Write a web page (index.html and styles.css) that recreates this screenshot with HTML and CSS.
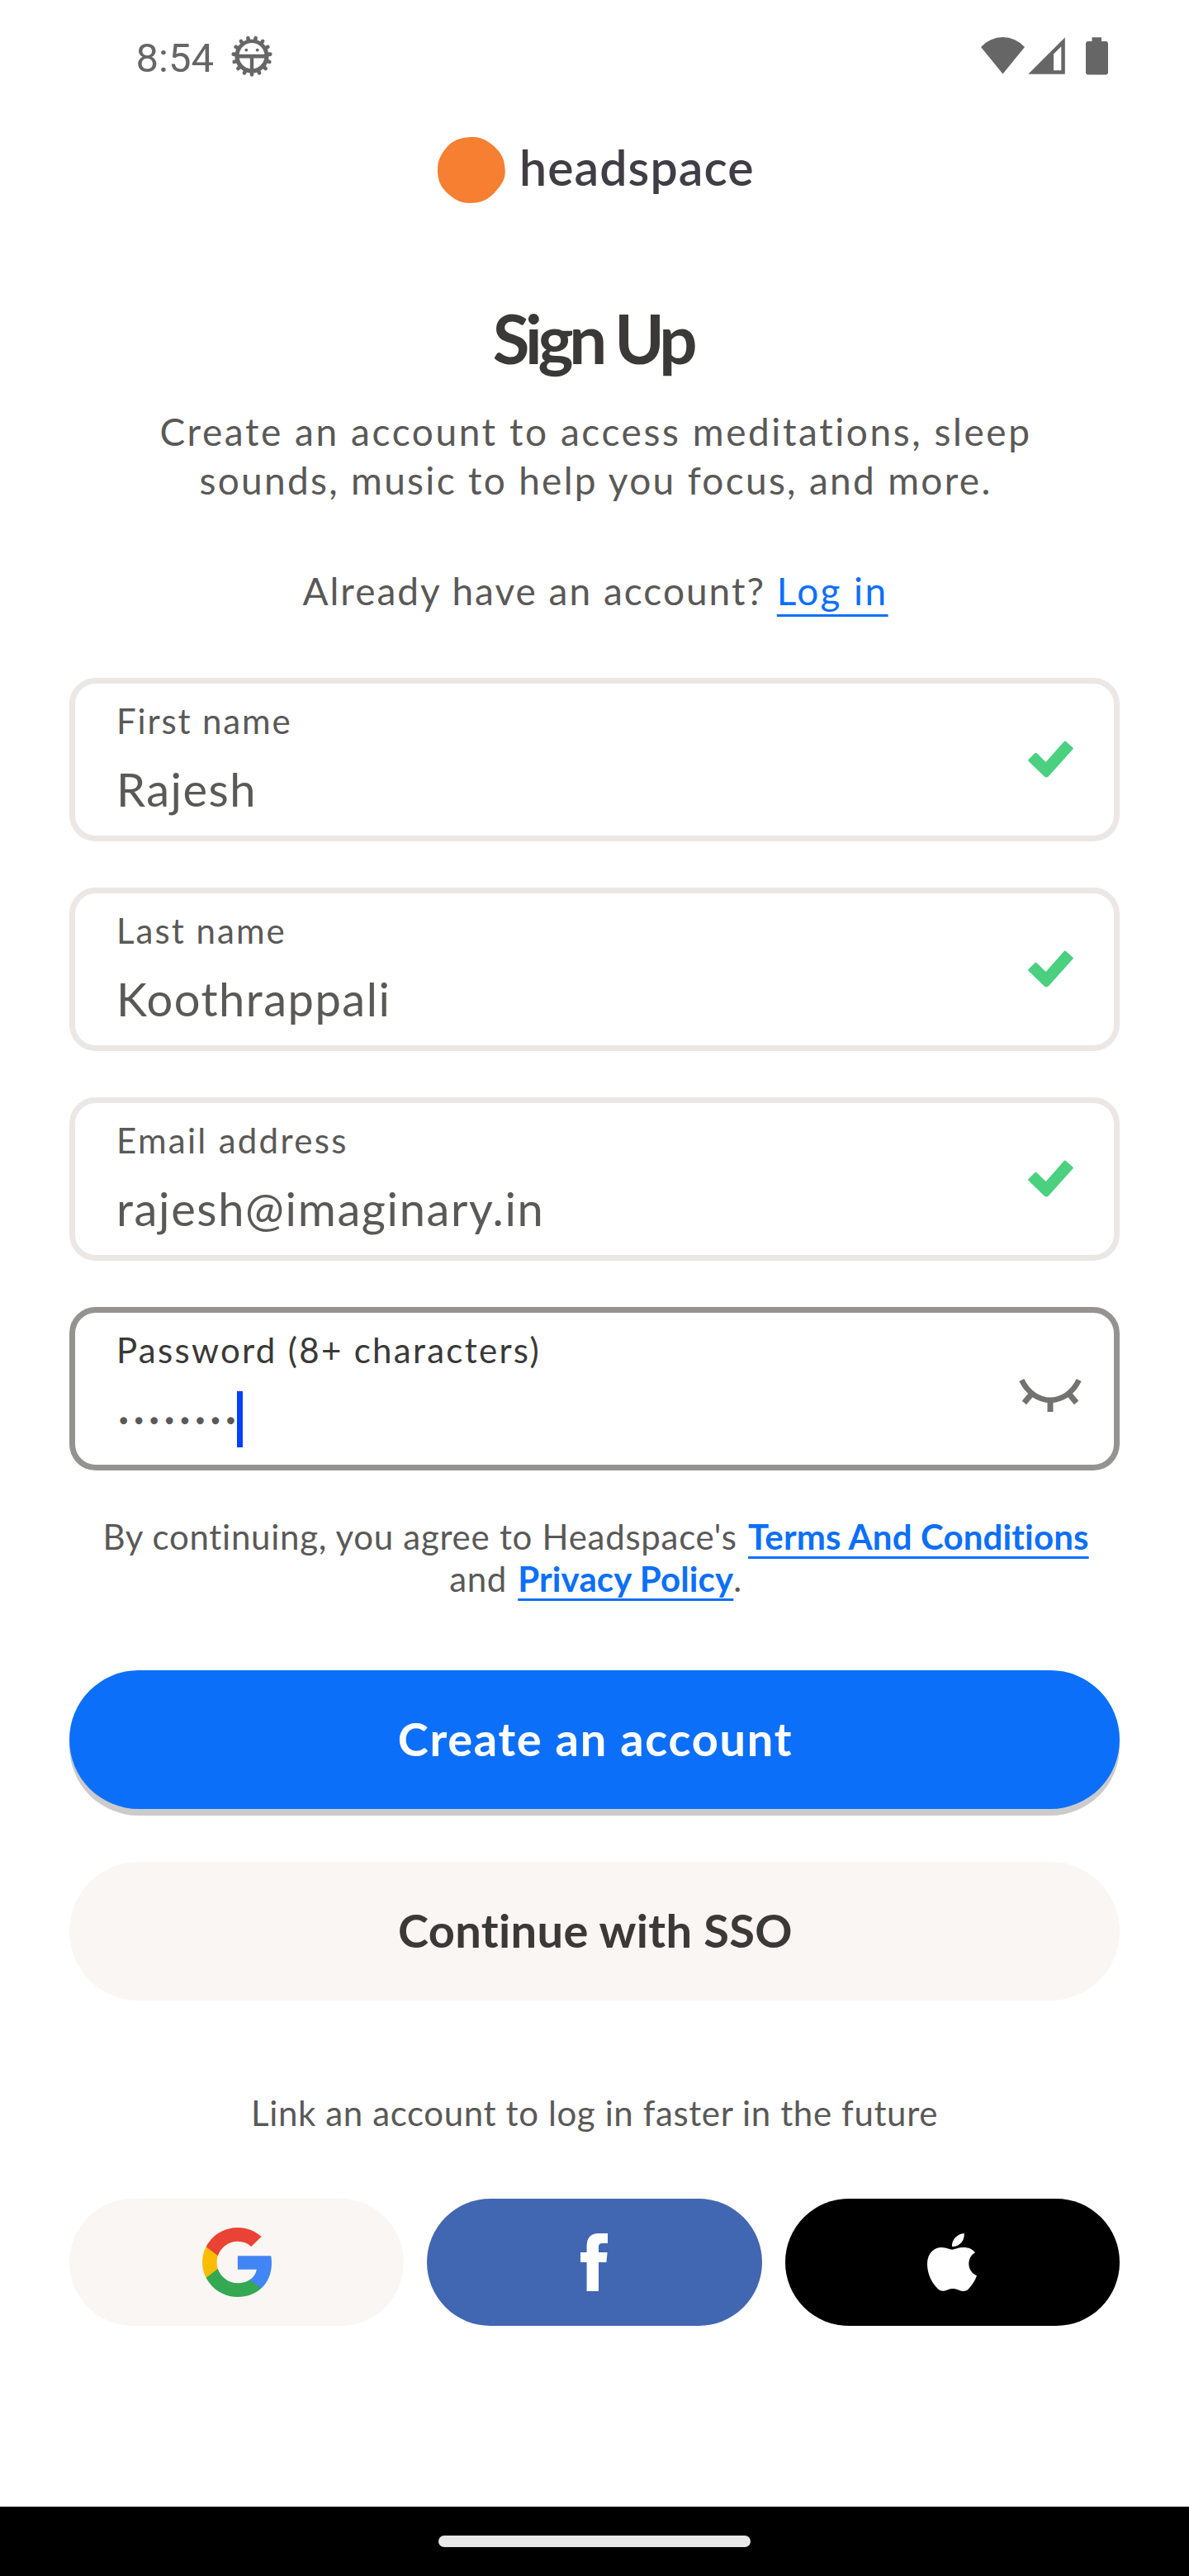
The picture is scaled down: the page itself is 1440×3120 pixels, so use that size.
FILE: index.html
```html
<!DOCTYPE html>
<html lang="en">
<head>
<meta charset="utf-8">
<title>Headspace – Sign Up</title>
<link rel="stylesheet" href="styles.css">
</head>
<body>
<header class="status">
  <div class="status-left">
    <span class="clock">8:54</span>
    <svg class="gear" width="52" height="52" viewBox="-26 -26 52 52">
      <g stroke="#666" stroke-width="4.6" stroke-linecap="round">
        <path d="M0 18V22.4"/>
        <path d="M0 18V22.4" transform="rotate(24)"/>
        <path d="M0 18V22.4" transform="rotate(48)"/>
        <path d="M0 18V22.4" transform="rotate(72)"/>
        <path d="M0 18V22.4" transform="rotate(96)"/>
        <path d="M0 18V22.4" transform="rotate(120)"/>
        <path d="M0 18V22.4" transform="rotate(144)"/>
        <path d="M0 18V22.4" transform="rotate(168)"/>
        <path d="M0 18V22.4" transform="rotate(192)"/>
        <path d="M0 18V22.4" transform="rotate(216)"/>
        <path d="M0 18V22.4" transform="rotate(240)"/>
        <path d="M0 18V22.4" transform="rotate(264)"/>
        <path d="M0 18V22.4" transform="rotate(288)"/>
        <path d="M0 18V22.4" transform="rotate(312)"/>
        <path d="M0 18V22.4" transform="rotate(336)"/>
      </g>
      <circle r="20.6" fill="#666"/>
      <path d="M-15.4-2.2A15.5 15.5 0 0 1 15.4-2.2ZM-15.3 2.4H-2.2V15.3A15.5 15.5 0 0 1-15.3 2.4ZM15.3 2.4H2.2V15.3A15.5 15.5 0 0 0 15.3 2.4Z" fill="#fff"/>
      <circle cx="-6.7" cy="-7.4" r="1.9" fill="#666"/>
      <circle cx="6.7" cy="-7.4" r="1.9" fill="#666"/>
    </svg>
  </div>
  <svg class="indicators" width="156" height="48" viewBox="1187 44 156 48" fill="#666">
    <path d="M1188 57A35.3 35.3 0 0 1 1241 57L1214.5 89.5Z"/>
    <path fill-rule="evenodd" d="M1245.3 89.7L1289.8 45.2V89.7ZM1276 65.5V85.3H1285.3V56.3Z"/>
    <path d="M1322.5 45.3H1334V50H1339a3 3 0 0 1 3 3V87.5a3 3 0 0 1-3 3H1318a3 3 0 0 1-3-3V53a3 3 0 0 1 3-3H1322.5Z"/>
  </svg>
</header>

<main class="page">
  <div class="logo">
    <svg width="82" height="80" viewBox="90 78 246 240"><path d="M212 78C236 77 254 82 276 97C306 117 330 146 333 178C337 208 337 226 322 248C304 274 286 294 264 306C244 315 226 318 204 318C182 317 168 313 148 300C124 282 104 264 95 236C89 212 89 196 91 178C96 150 112 126 132 106C154 86 178 80 212 78Z" fill="#f67f32"/></svg>
    <span class="logo-name">headspace</span>
  </div>

  <h1 class="title">Sign Up</h1>
  <p class="lead"><span class="lead-line-1">Create an account to access meditations, sleep</span><br><span class="lead-line-2">sounds, music to help you focus, and more.</span></p>
  <p class="login">Already have an account? <a class="login-link">Log in</a></p>

  <form class="fields">
    <div class="field">
      <div class="field-text">
        <span class="label label-first">First name</span>
        <span class="value">Rajesh</span>
      </div>
      <svg class="check" width="55" height="45" viewBox="1244.7 897.3 55 45" fill="#4bd080"><path d="M1245.4 920.1L1253 912.6Q1254.2 911.4 1255.4 912.6L1266.3 923.4L1288.2 898.5Q1289.4 897.3 1290.6 898.4L1299 905.8Q1300 906.8 1299 907.9L1269.5 940.8Q1267 943 1264.5 940.8L1245.4 922.2Q1244.3 921.1 1245.4 920.1Z"/></svg>
    </div>
    <div class="field">
      <div class="field-text">
        <span class="label">Last name</span>
        <span class="value">Koothrappali</span>
      </div>
      <svg class="check" width="55" height="45" viewBox="1244.7 897.3 55 45" fill="#4bd080"><path d="M1245.4 920.1L1253 912.6Q1254.2 911.4 1255.4 912.6L1266.3 923.4L1288.2 898.5Q1289.4 897.3 1290.6 898.4L1299 905.8Q1300 906.8 1299 907.9L1269.5 940.8Q1267 943 1264.5 940.8L1245.4 922.2Q1244.3 921.1 1245.4 920.1Z"/></svg>
    </div>
    <div class="field">
      <div class="field-text">
        <span class="label label-long">Email address</span>
        <span class="value value-email">rajesh@imaginary.in</span>
      </div>
      <svg class="check" width="55" height="45" viewBox="1244.7 897.3 55 45" fill="#4bd080"><path d="M1245.4 920.1L1253 912.6Q1254.2 911.4 1255.4 912.6L1266.3 923.4L1288.2 898.5Q1289.4 897.3 1290.6 898.4L1299 905.8Q1300 906.8 1299 907.9L1269.5 940.8Q1267 943 1264.5 940.8L1245.4 922.2Q1244.3 921.1 1245.4 920.1Z"/></svg>
    </div>
    <div class="field field-active">
      <div class="field-text">
        <span class="label label-long">Password (8+ characters)</span>
        <span class="password"><span class="dots">••••••••</span><span class="caret"></span></span>
      </div>
      <svg class="eye" width="76" height="40" viewBox="1234 1670 76 40" fill="none" stroke="#737270" stroke-width="6.6"><path d="M1237.3 1671.5C1253 1703.8 1291 1703.8 1306.7 1671.5"/><path d="M1248.8 1689L1240.4 1699M1295.4 1689L1303.6 1699M1272 1697V1710" stroke-width="7"/></svg>
    </div>
  </form>

  <p class="terms"><span class="terms-line-1">By continuing, you agree to Headspace's <a>Terms And Conditions</a></span><br>and <a>Privacy Policy</a>.</p>

  <button class="btn btn-primary">Create an account</button>
  <button class="btn btn-sso">Continue with SSO</button>

  <p class="hint">Link an account to log in faster in the future</p>
  <div class="social">
    <a class="social-btn google">
      <svg width="84" height="84" viewBox="1 1 21.56 22" preserveAspectRatio="none">
        <path fill="#4285f4" d="M22.56 12.25c0-.78-.07-1.53-.2-2.25H12v4.26h5.92c-.26 1.37-1.04 2.53-2.21 3.31v2.77h3.57c2.08-1.92 3.28-4.74 3.28-8.09z"/>
        <path fill="#34a853" d="M12 23c2.97 0 5.46-.98 7.28-2.66l-3.57-2.77c-.98.66-2.23 1.06-3.71 1.06-2.86 0-5.29-1.93-6.16-4.53H2.18v2.84C3.99 20.53 7.7 23 12 23z"/>
        <path fill="#fbbc05" d="M5.84 14.09c-.22-.66-.35-1.36-.35-2.09s.13-1.43.35-2.09V7.07H2.18C1.43 8.55 1 10.22 1 12s.43 3.45 1.18 4.93l2.85-2.22.81-.62z"/>
        <path fill="#ea4335" d="M12 5.38c1.62 0 3.06.56 4.21 1.64l3.15-3.15C17.45 2.09 14.97 1 12 1 7.7 1 3.99 3.47 2.18 7.07l3.66 2.84c.87-2.6 3.3-4.53 6.16-4.53z"/>
      </svg>
    </a>
    <a class="social-btn facebook">
      <svg width="33" height="70" viewBox="0 0 33 70" fill="#fff"><path d="M7.6 23V16C7.6 5.500 12.500 0 22 0H33V12H27C23 12 22 13.500 22 17V23H32.600L31.400 35H22V70H7.600V35H0V23Z"/></svg>
    </a>
    <a class="social-btn apple">
      <svg width="60" height="70" viewBox="579 195 180 210" fill="#fff"><path d="M713 195C716 220 697 244 669 243C667 218 688 197 713 195Z"/><path d="M670 254C680 253 692 246 710 246C730 246 743 252 753 265C721 283 722 334 759 349C752 369 741 385 727 399C718 407 705 406 694 401C680 395 667 394 654 400C641 406 628 407 618 397C594 374 579 341 579 306C579 268 603 246 632 246C648 246 660 254 670 254Z"/></svg>
    </a>
  </div>
</main>

<footer class="nav"><div class="nav-pill"></div></footer>
</body>
</html>
```
FILE: styles.css
```css
* { box-sizing: border-box; }

body {
  margin: 0;
  width: 1440px;
  height: 3120px;
  display: flex;
  flex-direction: column;
  background: #fff;
  color: #5a5957;
  font-family: Lato, "Open Sans", sans-serif;
  font-weight: 400;
}

h1, p { margin: 0; white-space: nowrap; }

.status {
  height: 136px;
  padding: 0 97px 0 164.5px;
  display: flex;
  align-items: center;
  justify-content: space-between;
}
.status-left { display: flex; align-items: center; gap: 20.5px; }
.clock {
  padding-top: 5px;
  font: 400 49px/58px Roboto, sans-serif;
  color: #666;
}
.gear, .indicators { display: block; }

.page {
  padding: 30px 84px 0;
  display: flex;
  flex-direction: column;
  text-align: center;
}

.logo { height: 80px; padding-left: 446px; display: flex; gap: 17px; }
.logo-name {
  font-size: 59px;
  font-weight: 600;
  line-height: 74px;
  letter-spacing: 1.06px;
  color: #413d45;
}

.title {
  margin-top: 119px;
  font-size: 81.5px;
  font-weight: 700;
  line-height: 90px;
  letter-spacing: -5.3px;
  text-indent: -4px;
  color: #3a3937;
}

.lead { margin-top: 38px; padding-left: 3px; font-size: 46px; line-height: 59px; }
.lead-line-1 { letter-spacing: 2.57px; }
.lead-line-2 { letter-spacing: 2.3px; }

.login { margin-top: 75px; padding-left: 2px; font-size: 46px; line-height: 59px; letter-spacing: 2px; }
.login-link {
  color: #0c6ffa;
  letter-spacing: 2.4px;
  text-decoration: underline 2.5px;
  text-underline-offset: 11px;
  text-decoration-skip-ink: none;
}

.fields { margin-top: 76px; display: flex; flex-direction: column; gap: 56px; text-align: left; }
.field {
  height: 198px;
  padding: 20px 49px 0;
  display: flex;
  justify-content: space-between;
  border: 7px solid #ebe7e4;
  border-radius: 32px;
}
.field-active { padding-right: 39px; border-color: #949391; }
.field-text { display: flex; flex-direction: column; gap: 23px; }
.label { padding-left: 1px; font-size: 42px; line-height: 50px; letter-spacing: 2.03px; }
.label-first { letter-spacing: 1.86px; }
.label-long { letter-spacing: 2.3px; }
.field-active .label { color: #3a3937; }
.value { padding: 1px 0 0 1px; font-size: 56px; line-height: 68px; letter-spacing: 1.5px; }
.value-email { letter-spacing: 1.64px; }
.check { margin-top: 49px; margin-right: 0.3px; }
.eye { margin-top: 60px; }

.password { padding: 2px 0 0 3px; display: flex; align-items: center; }
.dots { font-size: 23px; letter-spacing: 5.2px; margin-right: -4px; }
.caret { width: 7px; height: 68px; background: #0040ff; }

.terms { margin-top: 55px; padding-left: 3px; font-size: 42px; line-height: 51px; letter-spacing: 0.6px; }
.terms-line-1 { letter-spacing: 0.72px; }
.terms a {
  margin-left: 2px;
  color: #0c6ffa;
  font-weight: 700;
  letter-spacing: 0.14px;
  text-decoration: underline 3px;
  text-underline-offset: 8px;
  text-decoration-skip-ink: none;
}

.btn {
  height: 168px;
  padding: 0 0 3px 2px;
  border: 0;
  border-radius: 84px;
  font: 700 56px/68px Lato, sans-serif;
}
.btn-primary {
  margin-top: 85px;
  background: #0c6ffa;
  color: #fff;
  letter-spacing: 1.68px;
  box-shadow: 0 8px 0 #cbcbcb;
}
.btn-sso {
  margin-top: 64px;
  background: #faf6f3;
  color: #3a3937;
  letter-spacing: 0.33px;
}

.hint { margin-top: 111px; font-size: 42px; line-height: 50px; letter-spacing: 0.62px; }

.social { margin-top: 79px; display: grid; grid-template-columns: repeat(3, 1fr); gap: 28px; }
.social-btn { height: 154px; border-radius: 77px; display: flex; align-items: center; justify-content: center; }
.google { background: #faf6f3; }
.facebook { background: #4267b2; }
.apple { background: #000; }

.nav {
  height: 84px;
  margin-top: auto;
  display: flex;
  align-items: center;
  justify-content: center;
  background: #000;
}
.nav-pill { width: 378px; height: 14px; border-radius: 7px; background: #e8e8e8; }
```
